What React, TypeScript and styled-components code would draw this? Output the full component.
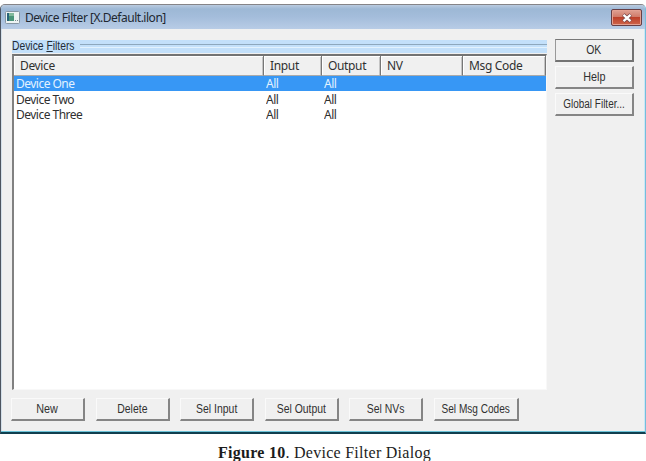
import React, { FC } from "react";
import styled, { createGlobalStyle } from "styled-components";

const GlobalStyle = createGlobalStyle`
  * {
    box-sizing: border-box;
  }

  body {
    margin: 0;
    background: #fff;
    overflow: hidden;
  }
`;

const Page = styled.div`
  width: 646px;
  height: 461px;
  padding-top: 4px;
  background: #fff;
`;

const Dialog = styled.section`
  display: flex;
  flex-direction: column;
  height: 430px;
  border: 1px solid #4d5560;
  border-top-color: #858487;
  border-right-color: #75bedb;
  border-bottom: 2px solid #103f4f;
  border-radius: 5px 5px 0 0;
  background: #f0f0f0;
  box-shadow: inset 0 -1px #6bc3d8, inset 1px 0 #d3dfe9, inset -1px 0 #cbe8f6;
  overflow: hidden;
`;

const TitleBar = styled.header`
  display: flex;
  align-items: center;
  height: 24px;
  padding: 1px 3px 0 4px;
  background: linear-gradient(#bacbdf 0, #9db8d5 4px, #a4bddb 12px, #b8cce6);
`;

const Title = styled.h1`
  flex: 1;
  margin: 1px 0 0 5px;
  font: 12px/18px "Noto Sans", sans-serif;
  letter-spacing: -0.48px;
  color: #202730;
  white-space: nowrap;
`;

const CloseButton = styled.button`
  display: flex;
  align-items: center;
  justify-content: center;
  width: 31px;
  height: 17px;
  padding: 0;
  border: 1px solid #663f45;
  border-radius: 2px;
  background: linear-gradient(#dfa294, #d17b69 45%, #bd412a 50%, #ce654b);
  box-shadow: inset 0 0 0 1px #e4a192;
`;

const Body = styled.main`
  display: flex;
  height: 360px;
  padding: 11px 11px 0 11px;
`;

const FilterGroup = styled.div`
  width: 535px;
  margin-right: 8px;
`;

const GroupLabel = styled.div`
  display: flex;
  align-items: center;
  height: 13px;
  font: 12px/13px "Liberation Sans", Arial, sans-serif;
  color: #222c38;
  background: #c3e0fa;
  white-space: nowrap;

  &::after {
    content: "";
    flex: 1;
    height: 2px;
    margin: 0 0 1px 6px;
    border-top: 1px solid #8ea8bd;
    border-bottom: 1px solid #e3f2fd;
  }
`;

const GroupText = styled.span`
  width: 62px;

  & > span {
    display: inline-block;
    transform: scaleX(0.86);
    transform-origin: left;
  }
`;

const ListView = styled.div`
  height: 336px;
  margin-top: 1px;
  border: 1px solid #f8f8f8;
  border-top: 2px solid #737373;
  border-left: 2px solid #818181;
  background: #fff;
  font: 12px/16px "Noto Sans", sans-serif;
`;

const columns = "250px 58px 59px 82px 1fr";

const ListHeader = styled.div`
  display: grid;
  grid-template-columns: ${columns};
  height: 19px;
  border-bottom: 1px solid #696969;
`;

const HeaderCell = styled.div`
  padding-left: 6px;
  border-right: 1px solid #777;
  border-bottom: 1px solid #aaa;
  background: #f0f0f0;
  box-shadow: inset 1px 1px #fff, inset -1px 0 #c4c4c4;
  line-height: 19px;
  letter-spacing: -0.35px;
  color: #303030;
  white-space: nowrap;
`;

const Row = styled.div<{ $selected?: boolean }>`
  display: grid;
  grid-template-columns: ${columns};
  height: ${(p) => (p.$selected ? 16 : 15.5)}px;
  padding-top: ${(p) => (p.$selected ? 1 : 0.5)}px;
  padding-left: 2px;
  line-height: 15px;
  letter-spacing: -0.52px;
  color: ${(p) => (p.$selected ? "#e3f2ff" : "#303030")};
  background: ${(p) => (p.$selected ? "#3797f5" : "#fff")};
  white-space: nowrap;

  & > span {
    height: 15px;
    overflow: hidden;
  }
`;

const Actions = styled.div`
  display: flex;
  flex-direction: column;
  gap: 4px;
  margin-top: -1px;
`;

const Footer = styled.footer`
  display: flex;
  gap: 10.6px;
  padding: 9px 0 0 10px;
`;

const ButtonFrame = styled.button<{ $width?: number; $default?: boolean }>`
  display: flex;
  justify-content: center;
  width: ${(p) => p.$width ?? 74}px;
  height: 23px;
  padding: 0;
  border: solid;
  border-width: 1px 2px 2px 1px;
  border-color: ${(p) =>
    p.$default ? "#777 #737373 #737373 #999" : "#fafafa #858585 #858585 #fafafa"};
  background: #f0f0f0;
  font: 12px/20px "Liberation Sans", Arial, sans-serif;
  color: #303030;
  white-space: nowrap;
`;

const ButtonText = styled.span<{ $stretch: number }>`
  flex: none;
  transform: scaleX(${(p) => p.$stretch});
`;

interface ButtonProps {
  label: string;
  width?: number;
  stretch?: number;
  isDefault?: boolean;
}

const Button: FC<ButtonProps> = ({ label, width, stretch = 0.87, isDefault }) => (
  <ButtonFrame $width={width} $default={isDefault}>
    <ButtonText $stretch={stretch}>{label}</ButtonText>
  </ButtonFrame>
);

const Caption = styled.p`
  margin: 8px 0 0 218px;
  font: 16px/22px "Liberation Serif", "Times New Roman", serif;
  letter-spacing: 0.27px;
  color: #1c1c1c;
  white-space: nowrap;
`;

const AppIcon: FC = () => (
  <svg width="15" height="13" viewBox="0 0 15 13">
    <rect x=".5" y=".5" width="14" height="12" rx="1" fill="#edf3f3" stroke="#8796a3" />
    <path d="M2 2h7v8H2z" fill="#4a9579" />
    <path d="M2 2h2v8H2z" fill="#286579" />
    <path d="M4 2h5v3H4z" fill="#82b99c" />
    <path d="M10 9.5h1M12 9.5h1" stroke="#7c8b91" />
  </svg>
);

const CloseIcon: FC = () => (
  <svg width="12" height="10" viewBox="0 0 12 10">
    <path d="M2.3 1.7l7.4 6.6M9.7 1.7l-7.4 6.6" stroke="#75474a" strokeWidth="3.8" />
    <path d="M2.5 1.9l7 6.2M9.5 1.9l-7 6.2" stroke="#fff" strokeWidth="2.3" />
  </svg>
);

const devices = ["Device One", "Device Two", "Device Three"];

const App: FC = () => (
  <Page>
    <GlobalStyle />
    <Dialog>
      <TitleBar>
        <AppIcon />
        <Title>Device Filter [X.Default.ilon]</Title>
        <CloseButton aria-label="Close">
          <CloseIcon />
        </CloseButton>
      </TitleBar>

      <Body>
        <FilterGroup>
          <GroupLabel>
            <GroupText>
              <span>
                Device <u>F</u>ilters
              </span>
            </GroupText>
          </GroupLabel>
          <ListView>
            <ListHeader>
              <HeaderCell>Device</HeaderCell>
              <HeaderCell>Input</HeaderCell>
              <HeaderCell>Output</HeaderCell>
              <HeaderCell>NV</HeaderCell>
              <HeaderCell>Msg Code</HeaderCell>
            </ListHeader>
            {devices.map((name, i) => (
              <Row key={name} $selected={i === 0}>
                <span>{name}</span>
                <span>All</span>
                <span>All</span>
              </Row>
            ))}
          </ListView>
        </FilterGroup>

        <Actions>
          <Button label="OK" width={79} isDefault />
          <Button label="Help" width={79} stretch={0.9} />
          <Button label="Global Filter..." width={79} stretch={0.83} />
        </Actions>
      </Body>

      <Footer>
        <Button label="New" stretch={0.9} />
        <Button label="Delete" />
        <Button label="Sel Input" />
        <Button label="Sel Output" />
        <Button label="Sel NVs" />
        <Button label="Sel Msg Codes" width={85} stretch={0.84} />
      </Footer>
    </Dialog>
    <Caption>
      <b>Figure 10</b>. Device Filter Dialog
    </Caption>
  </Page>
);

export default App;
